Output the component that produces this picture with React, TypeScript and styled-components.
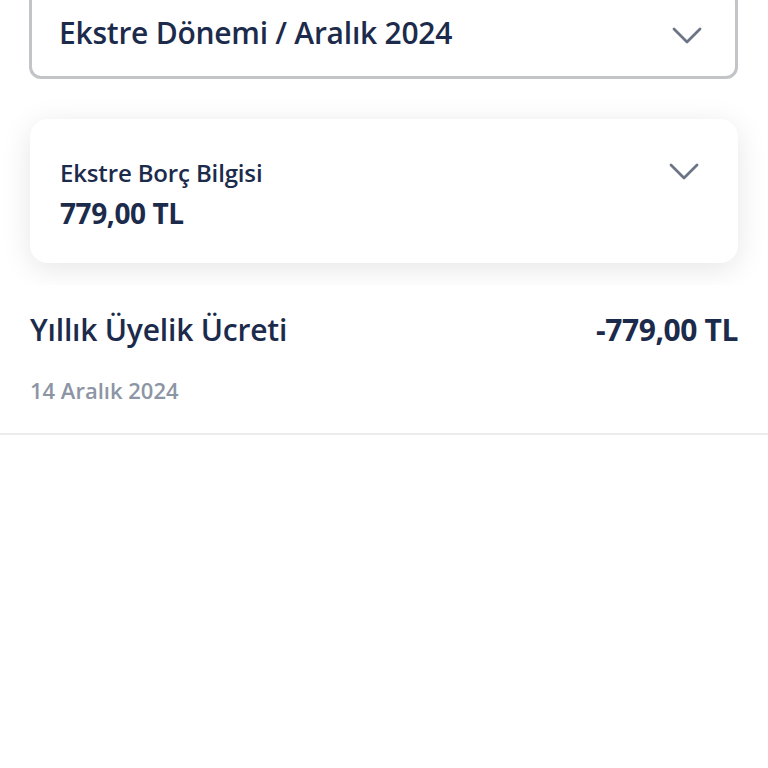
import React from 'react';
import styled, {createGlobalStyle} from "styled-components";

const GlobalStyle = createGlobalStyle`
    body {
        margin: 0;
        background: #ffffff;
        font-family: "Open Sans", "Noto Sans", sans-serif;
        color: #1c2b4b;
    }
`

const Chevron = () => (
    <svg width="30" height="18" viewBox="0 0 30 18" fill="none">
        <path d="M2 2 L15 15 L28 2" stroke="#6c7586" strokeWidth="2.8" strokeLinecap="round" strokeLinejoin="round"/>
    </svg>
);

export default function App() {
    return (
        <>
            <GlobalStyle/>
            <TopSection>
                <PeriodSelect>
                    <SelectText>Ekstre Dönemi / Aralık 2024</SelectText>
                    <ChevronSlot $offset={6}><Chevron/></ChevronSlot>
                </PeriodSelect>
                <DebtCard>
                    <CardInfo>
                        <CardLabel>Ekstre Borç Bilgisi</CardLabel>
                        <CardAmount>779,00 TL</CardAmount>
                    </CardInfo>
                    <ChevronSlot $offset={6}><Chevron/></ChevronSlot>
                </DebtCard>
            </TopSection>
            <TransactionList>
                <TransactionRow>
                    <RowLine>
                        <RowTitle>Yıllık Üyelik Ücreti</RowTitle>
                        <RowAmount>-779,00 TL</RowAmount>
                    </RowLine>
                    <RowDate>14 Aralık 2024</RowDate>
                </TransactionRow>
            </TransactionList>
        </>
    );
}

const TopSection = styled.section`
    height: 285px;
    overflow: hidden;
    padding: 0 30px;
    box-sizing: border-box;
    display: flex;
    flex-direction: column;
    gap: 40px;
`

const PeriodSelect = styled.div`
    margin-top: -10px;
    margin-left: -1px;
    height: 89px;
    box-sizing: border-box;
    border: 3px solid #c2c4c8;
    border-radius: 12px;
    display: flex;
    align-items: center;
    justify-content: space-between;
    padding: 0 33px 4px 27px;
    background: #fff;
`

const SelectText = styled.span`
    font-size: 30px;
    font-weight: 600;
    letter-spacing: -0.25px;
    color: #1c2b4b;
`

const DebtCard = styled.div`
    height: 144px;
    box-sizing: border-box;
    background: #fff;
    border-radius: 18px;
    box-shadow: 0 6px 30px rgba(0, 0, 0, 0.1);
    display: flex;
    justify-content: space-between;
    align-items: flex-start;
    padding: 38px 39px 0 30px;
`

const CardInfo = styled.div`
    display: flex;
    flex-direction: column;
    gap: 5px;
`

const CardLabel = styled.span`
    font-size: 24px;
    letter-spacing: -0.15px;
    font-weight: 600;
    line-height: 32px;
`

const CardAmount = styled.span`
    font-size: 28px;
    font-weight: 700;
    letter-spacing: -0.4px;
    line-height: 38px;
`

const ChevronSlot = styled.div<{ $offset: number }>`
    padding-top: ${p => p.$offset}px;
    display: flex;
`

const TransactionList = styled.div`
    display: flex;
    flex-direction: column;
`

const TransactionRow = styled.div`
    padding: 24px 30px 28px;
    border-bottom: 2px solid #ececec;
    display: flex;
    flex-direction: column;
    gap: 24px;
`

const RowLine = styled.div`
    display: flex;
    justify-content: space-between;
    align-items: center;
`

const RowTitle = styled.span`
    font-size: 30px;
    font-weight: 600;
    letter-spacing: -0.2px;
    line-height: 42px;
`

const RowAmount = styled.span`
    font-size: 30px;
    font-weight: 700;
    letter-spacing: -0.4px;
    line-height: 42px;
`

const RowDate = styled.span`
    font-size: 22px;
    color: #8c95a4;
    letter-spacing: 0;
    font-weight: 600;
    line-height: 30px;
`
